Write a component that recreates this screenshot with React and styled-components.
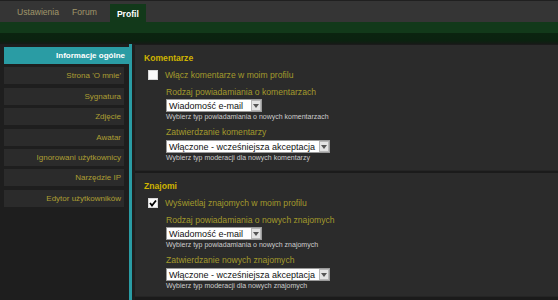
import React from "react";
import styled, { createGlobalStyle } from "styled-components";

const Global = createGlobalStyle`
  html, body { margin: 0; padding: 0; }
  body {
    background: #1e1e1e;
    font-family: "Liberation Sans", Arial, sans-serif;
    width: 558px;
    height: 300px;
    overflow: hidden;
  }
`;

const Page = styled.div`
  width: 558px;
  height: 300px;
  display: flex;
  flex-direction: column;
  background: #1e1e1e;
`;

const TopBar = styled.div`
  height: 21px;
  border-top: 1px solid #202020;
  background: #353535;
  display: flex;
  align-items: flex-end;
  padding-left: 17px;
`;

const Tab = styled.div`
  font-size: 8.6px;
  line-height: 17px;
  height: 17px;
  padding: ${(p) => (p.$active ? "0 7px" : "0 13px 4px 0")};
  margin-left: ${(p) => (p.$active ? "0" : "0")};
  color: ${(p) => (p.$active ? "#ffffff" : "#a0966a")};
  font-weight: ${(p) => (p.$active ? "bold" : "normal")};
  background: ${(p) => (p.$active ? "#12391a" : "transparent")};
  box-sizing: ${(p) => (p.$active ? "border-box" : "content-box")};
  ${(p) => (p.$active ? "padding-top: 2px; line-height: 17px; height: 18px;" : "line-height: 12px; height: 12px;")}
`;

const GreenBand = styled.div`
  height: 11px;
  background: #12391a;
`;

const DarkBand = styled.div`
  height: 11px;
  background: linear-gradient(#0b2410 0%, #0b2210 70%, #161a16 100%);
`;

const Body = styled.div`
  flex: 1;
  display: flex;
  min-height: 0;
`;

const Sidebar = styled.div`
  width: 129px;
  border-right: 3px solid #2a9ca4;
  padding-top: 3px;
  background: #1e1e1e;
  display: flex;
  flex-direction: column;
  gap: 3.4px;
`;

const NavItem = styled.div`
  margin-left: 4px;
  width: ${(p) => (p.$active ? "125px" : "120px")};
  height: 17px;
  line-height: 17px;
  box-sizing: border-box;
  padding-right: ${(p) => (p.$active ? "4px" : "3px")};
  text-align: right;
  font-size: 8px;
  white-space: nowrap;
  color: ${(p) => (p.$active ? "#ffffff" : "#ad9f33")};
  font-weight: ${(p) => (p.$active ? "bold" : "normal")};
  background: ${(p) => (p.$active ? "#2a9ca4" : "#2b2b2b")};
`;

const Main = styled.div`
  flex: 1;
  margin-left: 3px;
  display: flex;
  flex-direction: column;
  background: #1b1b1b;
  padding-top: 1px;
  padding-bottom: 3px;
  gap: 2px;
`;

const Section = styled.section`
  background: #2b2b2b;
  padding: 7px 0 ${(p) => p.$pb}px 9px;
  box-shadow: inset 0 -1px 0 #252525;
`;

const Title = styled.div`
  font-size: 8.6px;
  font-weight: bold;
  line-height: 12px;
  color: #cfb400;
`;

const CheckRow = styled.label`
  display: flex;
  align-items: center;
  margin: 5px 0 0 4px;
  height: 12px;
  gap: 7px;
  font-size: 8.6px;
  color: #a39a2c;
`;

const Box = styled.span`
  width: 10px;
  height: 10px;
  box-sizing: border-box;
  background: #fafafa;
  border: 1px solid #d8d8d8;
  display: inline-flex;
  align-items: center;
  justify-content: center;
`;

const Field = styled.div`
  margin: ${(p) => p.$mt}px 0 0 22px;
  display: flex;
  flex-direction: column;
  align-items: flex-start;
`;

const Label = styled.div`
  font-size: 8.6px;
  line-height: 12px;
  color: #a39a2c;
  margin-bottom: ${(p) => p.$mb}px;
`;

const SelectBox = styled.div`
  width: ${(p) => p.$w}px;
  height: 13px;
  box-sizing: border-box;
  background: #ffffff;
  border: 1px solid #9a9a9a;
  display: flex;
  align-items: center;
  justify-content: space-between;
  padding-left: 2px;
`;

const SelectValue = styled.span`
  font-size: 9px;
  color: #111;
  white-space: nowrap;
`;

const Arrow = styled.span`
  width: 10px;
  height: 11px;
  box-sizing: border-box;
  background: #e4e4e4;
  border: 1px solid #b8b8b8;
  display: inline-flex;
  align-items: center;
  justify-content: center;
`;

const Help = styled.div`
  font-size: 7px;
  line-height: 10px;
  color: #cdcdcd;
`;

const Check = () => (
  <svg width="8" height="8" viewBox="0 0 8 8">
    <path d="M1 4 L3 6.5 L7 1.5" stroke="#000" strokeWidth="1.8" fill="none" />
  </svg>
);

const Tri = () => (
  <svg width="6" height="4" viewBox="0 0 6 4">
    <path d="M0 0 H6 L3 4 Z" fill="#555" />
  </svg>
);

const Select = ({ w, value }) => (
  <SelectBox $w={w}>
    <SelectValue>{value}</SelectValue>
    <Arrow>
      <Tri />
    </Arrow>
  </SelectBox>
);

const nav = [
  "Informacje ogólne",
  "Strona 'O mnie'",
  "Sygnatura",
  "Zdjęcie",
  "Awatar",
  "Ignorowani użytkownicy",
  "Narzędzie IP",
  "Edytor użytkowników",
];

const SettingsSection = ({ title, checkLabel, checked, f1, h1, f2, h2, pb }) => (
  <Section $pb={pb}>
    <Title>{title}</Title>
    <CheckRow>
      <Box>{checked && <Check />}</Box>
      {checkLabel}
    </CheckRow>
    <Field $mt={5}>
      <Label $mb={1}>{f1}</Label>
      <Select w={96} value="Wiadomość e-mail" />
      <Help>{h1}</Help>
    </Field>
    <Field $mt={4}>
      <Label $mb={2}>{f2}</Label>
      <Select w={164} value="Włączone - wcześniejsza akceptacja" />
      <Help>{h2}</Help>
    </Field>
  </Section>
);

export default function App() {
  return (
    <Page>
      <Global />
      <TopBar>
        <Tab>Ustawienia</Tab>
        <Tab>Forum</Tab>
        <Tab $active>Profil</Tab>
      </TopBar>
      <GreenBand />
      <DarkBand />
      <Body>
        <Sidebar>
          {nav.map((n, i) => (
            <NavItem key={n} $active={i === 0}>
              {n}
            </NavItem>
          ))}
        </Sidebar>
        <Main>
          <SettingsSection
            pb={8}
            title="Komentarze"
            checkLabel="Włącz komentarze w moim profilu"
            checked={false}
            f1="Rodzaj powiadamiania o komentarzach"
            h1="Wybierz typ powiadamiania o nowych komentarzach"
            f2="Zatwierdzanie komentarzy"
            h2="Wybierz typ moderacji dla nowych komentarzy"
          />
          <SettingsSection
            pb={6}
            title="Znajomi"
            checkLabel="Wyświetlaj znajomych w moim profilu"
            checked
            f1="Rodzaj powiadamiania o nowych znajomych"
            h1="Wybierz typ powiadamiania o nowych znajomych"
            f2="Zatwierdzanie nowych znajomych"
            h2="Wybierz typ moderacji dla nowych znajomych"
          />
        </Main>
      </Body>
    </Page>
  );
}
